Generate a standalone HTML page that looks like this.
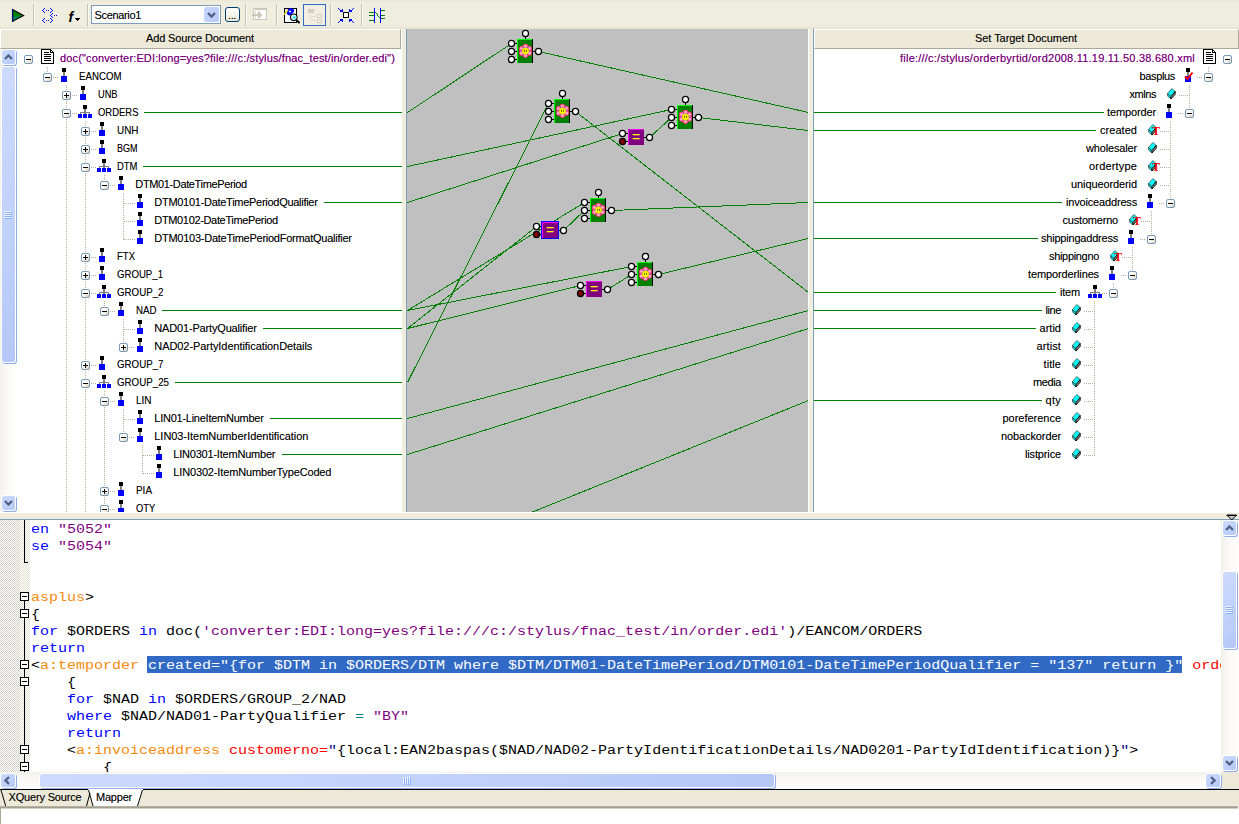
<!DOCTYPE html><html><head><meta charset="utf-8"><title>XQuery Mapper</title><style>
*{box-sizing:border-box;margin:0;padding:0}
html,body{width:1239px;height:824px;overflow:hidden;background:#efedde}
body{position:relative;font-family:"Liberation Sans",sans-serif;font-size:11px;color:#000;line-height:13px}
.a{position:absolute}
.t{position:absolute;white-space:pre;height:13px;line-height:13px;transform-origin:0 50%;text-shadow:0 0 0 rgba(0,0,0,.35)}
.tr{position:absolute;white-space:pre;height:13px;line-height:13px;transform-origin:100% 50%;text-align:right;text-shadow:0 0 0 rgba(0,0,0,.35)}
.pur{color:#7a007a;text-shadow:0 0 0 rgba(122,0,122,.6)}
.ex{position:absolute;width:9px;height:9px;border:1px solid #7898b5;border-radius:2px;background:linear-gradient(135deg,#fff 0%,#fff 40%,#d6d0bc 100%)}
.ex i{position:absolute;left:1px;top:3px;width:5px;height:1px;background:#000}
.ex b{position:absolute;left:3px;top:1px;width:1px;height:5px;background:#000}
.hd{position:absolute;background:#ece9d8;border-right:1px solid #aca899;border-bottom:1px solid #aca899;border-top:1px solid #fff;border-left:1px solid #fff;text-align:center;line-height:16px;height:20px}
.code{position:absolute;left:31px;white-space:pre;font-family:"Liberation Mono",monospace;font-size:12px;height:17px;line-height:17px;letter-spacing:0;transform:scaleX(1.25);transform-origin:0 0}
.kw{color:#0000ff}.st{color:#800080}.el{color:#f58a0c}.at{color:#ff0000}.op{color:#008080}.nv{color:#000080}
.sel{color:#fff}
.sb{position:absolute;background:linear-gradient(135deg,#cddafd 0%,#c1d2fb 50%,#b4c7f6 100%);border:1px solid #fff;border-radius:3px;box-shadow:1px 1px 0 0 #8fabe8}
</style></head><body>
<div class="a" style="left:0;top:0;width:1239px;height:29px;background:linear-gradient(180deg,#ebe8d7 0,#ebe8d7 1px,#efedde 2px,#efedde 26px,#ebe9da 27px,#e4e1cf 29px)"></div>
<div class="a" style="left:33px;top:4px;width:1px;height:22px;background:#c5c2b8"></div><div class="a" style="left:34px;top:4px;width:1px;height:22px;background:#f9f8f1"></div>
<div class="a" style="left:87px;top:4px;width:1px;height:22px;background:#c5c2b8"></div><div class="a" style="left:88px;top:4px;width:1px;height:22px;background:#f9f8f1"></div>
<div class="a" style="left:245px;top:4px;width:1px;height:22px;background:#c5c2b8"></div><div class="a" style="left:246px;top:4px;width:1px;height:22px;background:#f9f8f1"></div>
<div class="a" style="left:276px;top:4px;width:1px;height:22px;background:#c5c2b8"></div><div class="a" style="left:277px;top:4px;width:1px;height:22px;background:#f9f8f1"></div>
<div class="a" style="left:330px;top:4px;width:1px;height:22px;background:#c5c2b8"></div><div class="a" style="left:331px;top:4px;width:1px;height:22px;background:#f9f8f1"></div>
<div class="a" style="left:361px;top:4px;width:1px;height:22px;background:#c5c2b8"></div><div class="a" style="left:362px;top:4px;width:1px;height:22px;background:#f9f8f1"></div>
<svg class="a" style="left:11px;top:8px" width="15" height="16"><polygon points="1.5,1.6 12.6,7.5 1.5,13.4" fill="#008000" stroke="#000" stroke-width="1.1"/><polygon points="2.4,9 9,8.2 2.4,12" fill="#008080"/><rect x="1" y="1" width="1.2" height="13" fill="#000080"/></svg>
<svg class="a" style="left:42px;top:8px" width="17" height="16" shape-rendering="crispEdges" fill="#0000ff"><rect x="2" y="0" width="1" height="1"/><rect x="1" y="1" width="1" height="1"/><rect x="0" y="2" width="1" height="1"/><rect x="1" y="3" width="1" height="1"/><rect x="2" y="4" width="1" height="1"/><rect x="4" y="2" width="1" height="1"/><rect x="6" y="2" width="1" height="1"/><rect x="8" y="0" width="1" height="1"/><rect x="9" y="1" width="1" height="1"/><rect x="10" y="2" width="1" height="1"/><rect x="9" y="3" width="1" height="1"/><rect x="8" y="4" width="1" height="1"/><rect x="10" y="5" width="1" height="1"/><rect x="9" y="6" width="1" height="1"/><rect x="8" y="7" width="1" height="1"/><rect x="9" y="8" width="1" height="1"/><rect x="10" y="9" width="1" height="1"/><rect x="12" y="7" width="1" height="1"/><rect x="14" y="7" width="1" height="1"/><rect x="2" y="10" width="1" height="1"/><rect x="1" y="11" width="1" height="1"/><rect x="0" y="12" width="1" height="1"/><rect x="1" y="13" width="1" height="1"/><rect x="2" y="14" width="1" height="1"/><rect x="4" y="12" width="1" height="1"/><rect x="6" y="12" width="1" height="1"/><rect x="8" y="10" width="1" height="1"/><rect x="9" y="11" width="1" height="1"/><rect x="10" y="12" width="1" height="1"/><rect x="9" y="13" width="1" height="1"/><rect x="8" y="14" width="1" height="1"/></svg>
<div class="a" style="left:68.5px;top:8.5px;width:12px;height:16px;font-family:'Liberation Sans',sans-serif;font-style:italic;font-weight:bold;font-size:14px;line-height:16px">f</div>
<svg class="a" style="left:75px;top:18px" width="6" height="4" shape-rendering="crispEdges"><rect x="0" y="0" width="5" height="1"/><rect x="1" y="1" width="3" height="1"/><rect x="2" y="2" width="1" height="1"/></svg>
<div class="a" style="left:91px;top:5px;width:130px;height:19px;border:1px solid #7f9db9;background:#fff"></div>
<div class="t " id="scen" style="left:94.5px;top:8.6px;letter-spacing:-0.339px;">Scenario1</div>
<div class="a" style="left:204px;top:7px;width:15px;height:15px;background:linear-gradient(135deg,#c6d6fd,#b7c9f7);border-radius:2px"></div>
<svg class="a" style="left:207px;top:12px" width="10" height="7"><path d="M1 1L4.5 4.5L8 1" fill="none" stroke="#4d6185" stroke-width="2.3"/></svg>
<div class="a" style="left:225px;top:7px;width:15px;height:15px;border:1px solid #003c74;border-radius:3px;background:linear-gradient(#fff,#ece9d8)"></div>
<div class="t " id="dots" style="left:228px;top:9px;letter-spacing:-0.391px;">...</div>
<svg class="a" style="left:252px;top:8px" width="16" height="13" shape-rendering="crispEdges"><rect x="1.5" y="0.5" width="13" height="11" fill="#fff" stroke="#cbc7b8"/><rect x="1" y="0" width="14" height="2" fill="#cbc7b8"/><rect x="2" y="1" width="1" height="1" fill="#fff"/><rect x="3" y="3" width="1" height="8" fill="#dedbd0"/><rect x="0" y="6" width="8" height="2" fill="#cbc7b8"/><polygon points="6,3 10,7 6,11" fill="#cbc7b8"/></svg>
<svg class="a" style="left:283px;top:7px" width="18" height="17"><rect x="1.5" y="1.5" width="12" height="14" fill="#fff" stroke="#000" stroke-width="1"/><path d="M4 3.5C5 1 10 0.5 11 3C12 5 9 6 8.5 8L6 8.5C4 8 3 6 4 3.5Z" fill="#0000ff"/><circle cx="7" cy="4.5" r="1" fill="#fff"/><path d="M1 7.5L5 3" stroke="#e8d800" stroke-width="1.4"/><circle cx="10.8" cy="10.3" r="3.3" fill="#d8fbff" stroke="#000" stroke-width="1.1"/><circle cx="11.3" cy="10.5" r="1.3" fill="#00e8f0"/><path d="M13.2 13L16.6 16" stroke="#000" stroke-width="2"/></svg>
<div class="a" style="left:303px;top:4px;width:23px;height:22px;border:1px solid #316ac5;background:#f1eee1"></div>
<svg class="a" style="left:307px;top:8px" width="17" height="16" shape-rendering="crispEdges"><rect x="1" y="1" width="6" height="4" fill="#d2cfc2"/><rect x="3" y="6" width="1" height="1" fill="#d2cfc2"/><rect x="3" y="8" width="1" height="1" fill="#d2cfc2"/><rect x="3" y="10" width="1" height="1" fill="#d2cfc2"/><rect x="3" y="12" width="1" height="1" fill="#d2cfc2"/><rect x="5" y="8" width="1" height="1" fill="#d2cfc2"/><rect x="7" y="8" width="1" height="1" fill="#d2cfc2"/><rect x="5" y="12" width="1" height="1" fill="#d2cfc2"/><rect x="7" y="12" width="1" height="1" fill="#d2cfc2"/><rect x="10" y="6" width="5" height="4" fill="#d2cfc2"/><rect x="11" y="7" width="3" height="2" fill="#f4f2e8"/><rect x="10" y="11" width="5" height="4" fill="#d2cfc2"/><rect x="11" y="12" width="3" height="2" fill="#f4f2e8"/></svg>
<svg class="a" style="left:338px;top:8px" width="17" height="16" shape-rendering="crispEdges"><rect x="5" y="4" width="6" height="6" fill="#000"/><rect x="6" y="5" width="4" height="4" fill="#fff"/><g fill="#0000ff"><rect x="0" y="0" width="1" height="1"/><rect x="15" y="0" width="1" height="1"/><rect x="0" y="14" width="1" height="1"/><rect x="15" y="14" width="1" height="1"/><rect x="1" y="1" width="1" height="1"/><rect x="14" y="1" width="1" height="1"/><rect x="1" y="13" width="1" height="1"/><rect x="14" y="13" width="1" height="1"/><rect x="2" y="2" width="1" height="1"/><rect x="13" y="2" width="1" height="1"/><rect x="2" y="12" width="1" height="1"/><rect x="13" y="12" width="1" height="1"/><rect x="3" y="3" width="1" height="1"/><rect x="12" y="3" width="1" height="1"/><rect x="3" y="11" width="1" height="1"/><rect x="12" y="11" width="1" height="1"/><rect x="4" y="3" width="1" height="1"/><rect x="11" y="3" width="1" height="1"/><rect x="4" y="11" width="1" height="1"/><rect x="11" y="11" width="1" height="1"/><rect x="2" y="3" width="1" height="1"/><rect x="13" y="3" width="1" height="1"/><rect x="2" y="11" width="1" height="1"/><rect x="13" y="11" width="1" height="1"/><rect x="4" y="2" width="1" height="1"/><rect x="11" y="2" width="1" height="1"/><rect x="4" y="12" width="1" height="1"/><rect x="11" y="12" width="1" height="1"/><rect x="4" y="1" width="1" height="1"/><rect x="11" y="1" width="1" height="1"/><rect x="4" y="13" width="1" height="1"/><rect x="11" y="13" width="1" height="1"/><rect x="3" y="2" width="1" height="1"/><rect x="12" y="2" width="1" height="1"/><rect x="3" y="12" width="1" height="1"/><rect x="12" y="12" width="1" height="1"/></g></svg>
<svg class="a" style="left:369px;top:8px" width="17" height="16" shape-rendering="crispEdges"><g fill="#008000"><rect x="0" y="4" width="6" height="1"/><rect x="0" y="7" width="5" height="1"/><rect x="0" y="12" width="5" height="1"/><rect x="12" y="2" width="4" height="1"/><rect x="12" y="7" width="4" height="1"/><rect x="12" y="10" width="4" height="1"/><rect x="6" y="4" width="1" height="1"/><rect x="7" y="5" width="1" height="1"/><rect x="8" y="6" width="1" height="2"/><rect x="9" y="8" width="1" height="1"/><rect x="10" y="9" width="1" height="1"/><rect x="11" y="10" width="1" height="1"/></g><rect x="5" y="0" width="1" height="15" fill="#0000ff"/><rect x="11" y="0" width="1" height="15" fill="#0000ff"/></svg>
<div class="a" style="left:0;top:29px;width:402px;height:484px;background:#fff;overflow:hidden" id="lp">
</div>
<div class="hd" style="left:0;top:29px;width:401px"></div>
<div class="t " id="hsrc" style="left:146px;top:31.6px;letter-spacing:-0.141px;">Add Source Document</div>
<div class="a" style="left:0;top:49px;width:17px;height:464px;background:linear-gradient(90deg,#f3f1ec,#fbfaf8 50%,#fefefd)"></div>
<div class="sb" style="left:1px;top:49px;width:15px;height:16px"></div>
<svg class="a" style="left:4px;top:54px" width="9" height="6"><path d="M1 5L4.5 1.5L8 5" fill="none" stroke="#4d6185" stroke-width="2.3"/></svg>
<div class="sb" style="left:1px;top:66px;width:15px;height:297px"></div>
<svg class="a" style="left:4px;top:211px" width="8" height="8" shape-rendering="crispEdges"><g fill="#eef4fe"><rect x="0" y="0" width="7" height="1"/><rect x="0" y="2" width="7" height="1"/><rect x="0" y="4" width="7" height="1"/><rect x="0" y="6" width="7" height="1"/></g><g fill="#8cb0f8"><rect x="1" y="1" width="7" height="1"/><rect x="1" y="3" width="7" height="1"/><rect x="1" y="5" width="7" height="1"/><rect x="1" y="7" width="7" height="1"/></g></svg>
<div class="sb" style="left:1px;top:495px;width:15px;height:16px"></div>
<svg class="a" style="left:4px;top:500px" width="9" height="6"><path d="M1 1L4.5 4.5L8 1" fill="none" stroke="#4d6185" stroke-width="2.3"/></svg>
<div class="a" style="left:17px;top:49px;width:385px;height:464px;overflow:hidden"><div class="a" style="left:-17px;top:-49px;width:420px;height:600px">
<div class="a" style="left:47px;top:67px;width:1px;height:11px;background:repeating-linear-gradient(180deg,#b5b09c 0 1px,transparent 1px 2px)"></div>
<div class="a" style="left:66px;top:85px;width:1px;height:428px;background:repeating-linear-gradient(180deg,#b5b09c 0 1px,transparent 1px 2px)"></div>
<div class="a" style="left:85px;top:121px;width:1px;height:392px;background:repeating-linear-gradient(180deg,#b5b09c 0 1px,transparent 1px 2px)"></div>
<div class="a" style="left:104px;top:175px;width:1px;height:11px;background:repeating-linear-gradient(180deg,#b5b09c 0 1px,transparent 1px 2px)"></div>
<div class="a" style="left:123px;top:193px;width:1px;height:47px;background:repeating-linear-gradient(180deg,#b5b09c 0 1px,transparent 1px 2px)"></div>
<div class="a" style="left:104px;top:301px;width:1px;height:11px;background:repeating-linear-gradient(180deg,#b5b09c 0 1px,transparent 1px 2px)"></div>
<div class="a" style="left:123px;top:319px;width:1px;height:29px;background:repeating-linear-gradient(180deg,#b5b09c 0 1px,transparent 1px 2px)"></div>
<div class="a" style="left:104px;top:391px;width:1px;height:122px;background:repeating-linear-gradient(180deg,#b5b09c 0 1px,transparent 1px 2px)"></div>
<div class="a" style="left:123px;top:409px;width:1px;height:29px;background:repeating-linear-gradient(180deg,#b5b09c 0 1px,transparent 1px 2px)"></div>
<div class="a" style="left:142px;top:445px;width:1px;height:29px;background:repeating-linear-gradient(180deg,#b5b09c 0 1px,transparent 1px 2px)"></div>
<div class="ex" style="left:24px;top:55px"><i></i></div>
<svg class="a" style="left:41px;top:49px" width="14" height="16" shape-rendering="crispEdges"><path d="M0.5 0.5H9.5L12.5 3.5V14.5H0.5Z" fill="#fff" stroke="#000"/><path d="M9.5 0.5V3.5H12.5" fill="none" stroke="#000"/><rect x="12" y="4" width="1" height="11" fill="#000"/><rect x="1" y="14" width="12" height="1" fill="#000"/><rect x="3" y="3" width="5" height="1" fill="#000"/><rect x="3" y="5" width="7" height="1" fill="#000"/><rect x="3" y="7" width="7" height="1" fill="#000"/><rect x="3" y="9" width="7" height="1" fill="#000"/><rect x="3" y="11" width="7" height="1" fill="#000"/></svg>
<div class="t pur" id="l0" style="left:60px;top:52px;letter-spacing:0.145px;">doc("converter:EDI:long=yes?file:///c:/stylus/fnac_test/in/order.edi")</div>
<div class="ex" style="left:43px;top:73px"><i></i></div>
<div class="a" style="left:53px;top:77px;width:6px;height:1px;background:repeating-linear-gradient(90deg,#b5b09c 0 1px,transparent 1px 2px)"></div>
<svg class="a" style="left:61px;top:67px" width="6" height="15" shape-rendering="crispEdges"><rect x="1" y="1" width="4" height="4" fill="#000"/><rect x="2" y="5" width="2" height="4" fill="#808080"/><rect x="0" y="9" width="6" height="6" fill="#0000ff"/></svg>
<div class="t " id="l1" style="left:78.9px;top:70px;transform:scaleX(0.8803);">EANCOM</div>
<div class="ex" style="left:62px;top:91px"><i></i><b></b></div>
<div class="a" style="left:72px;top:95px;width:6px;height:1px;background:repeating-linear-gradient(90deg,#b5b09c 0 1px,transparent 1px 2px)"></div>
<svg class="a" style="left:80px;top:85px" width="6" height="15" shape-rendering="crispEdges"><rect x="1" y="1" width="4" height="4" fill="#000"/><rect x="2" y="5" width="2" height="4" fill="#808080"/><rect x="0" y="9" width="6" height="6" fill="#0000ff"/></svg>
<div class="t " id="l2" style="left:97.9px;top:88px;transform:scaleX(0.8393);">UNB</div>
<div class="ex" style="left:62px;top:109px"><i></i></div>
<div class="a" style="left:72px;top:113px;width:6px;height:1px;background:repeating-linear-gradient(90deg,#b5b09c 0 1px,transparent 1px 2px)"></div>
<svg class="a" style="left:78px;top:103px" width="14" height="15" shape-rendering="crispEdges"><rect x="5" y="2" width="4" height="4" fill="#000"/><rect x="6" y="6" width="2" height="3" fill="#808080"/><rect x="2" y="9" width="10" height="1" fill="#808080"/><rect x="2" y="9" width="1" height="2" fill="#808080"/><rect x="11" y="9" width="1" height="2" fill="#808080"/><rect x="6" y="9" width="2" height="2" fill="#808080"/><rect x="0" y="11" width="4" height="4" fill="#0000ff"/><rect x="5" y="11" width="4" height="4" fill="#0000ff"/><rect x="10" y="11" width="4" height="4" fill="#0000ff"/></svg>
<div class="t " id="l3" style="left:97.9px;top:106px;transform:scaleX(0.8606);">ORDERS</div>
<div class="a" style="left:144px;top:112px;width:258px;height:1px;background:#008000"></div>
<div class="ex" style="left:81px;top:127px"><i></i><b></b></div>
<div class="a" style="left:91px;top:131px;width:6px;height:1px;background:repeating-linear-gradient(90deg,#b5b09c 0 1px,transparent 1px 2px)"></div>
<svg class="a" style="left:99px;top:121px" width="6" height="15" shape-rendering="crispEdges"><rect x="1" y="1" width="4" height="4" fill="#000"/><rect x="2" y="5" width="2" height="4" fill="#808080"/><rect x="0" y="9" width="6" height="6" fill="#0000ff"/></svg>
<div class="t " id="l4" style="left:116.9px;top:124px;transform:scaleX(0.9017);">UNH</div>
<div class="ex" style="left:81px;top:145px"><i></i><b></b></div>
<div class="a" style="left:91px;top:149px;width:6px;height:1px;background:repeating-linear-gradient(90deg,#b5b09c 0 1px,transparent 1px 2px)"></div>
<svg class="a" style="left:99px;top:139px" width="6" height="15" shape-rendering="crispEdges"><rect x="1" y="1" width="4" height="4" fill="#000"/><rect x="2" y="5" width="2" height="4" fill="#808080"/><rect x="0" y="9" width="6" height="6" fill="#0000ff"/></svg>
<div class="t " id="l5" style="left:116.9px;top:142px;transform:scaleX(0.8180);">BGM</div>
<div class="ex" style="left:81px;top:163px"><i></i></div>
<div class="a" style="left:91px;top:167px;width:6px;height:1px;background:repeating-linear-gradient(90deg,#b5b09c 0 1px,transparent 1px 2px)"></div>
<svg class="a" style="left:97px;top:157px" width="14" height="15" shape-rendering="crispEdges"><rect x="5" y="2" width="4" height="4" fill="#000"/><rect x="6" y="6" width="2" height="3" fill="#808080"/><rect x="2" y="9" width="10" height="1" fill="#808080"/><rect x="2" y="9" width="1" height="2" fill="#808080"/><rect x="11" y="9" width="1" height="2" fill="#808080"/><rect x="6" y="9" width="2" height="2" fill="#808080"/><rect x="0" y="11" width="4" height="4" fill="#0000ff"/><rect x="5" y="11" width="4" height="4" fill="#0000ff"/><rect x="10" y="11" width="4" height="4" fill="#0000ff"/></svg>
<div class="t " id="l6" style="left:116.9px;top:160px;transform:scaleX(0.8603);">DTM</div>
<div class="a" style="left:143px;top:166px;width:259px;height:1px;background:#008000"></div>
<div class="ex" style="left:100px;top:181px"><i></i></div>
<div class="a" style="left:110px;top:185px;width:6px;height:1px;background:repeating-linear-gradient(90deg,#b5b09c 0 1px,transparent 1px 2px)"></div>
<svg class="a" style="left:118px;top:175px" width="6" height="15" shape-rendering="crispEdges"><rect x="1" y="1" width="4" height="4" fill="#000"/><rect x="2" y="5" width="2" height="4" fill="#808080"/><rect x="0" y="9" width="6" height="6" fill="#0000ff"/></svg>
<div class="t " id="l7" style="left:135.3px;top:178px;letter-spacing:-0.365px;">DTM01-DateTimePeriod</div>
<div class="a" style="left:124px;top:203px;width:11px;height:1px;background:repeating-linear-gradient(90deg,#b5b09c 0 1px,transparent 1px 2px)"></div>
<svg class="a" style="left:137px;top:193px" width="6" height="15" shape-rendering="crispEdges"><rect x="1" y="1" width="4" height="4" fill="#000"/><rect x="2" y="5" width="2" height="4" fill="#808080"/><rect x="0" y="9" width="6" height="6" fill="#0000ff"/></svg>
<div class="t " id="l8" style="left:154.3px;top:196px;letter-spacing:-0.281px;">DTM0101-DateTimePeriodQualifier</div>
<div class="a" style="left:324px;top:202px;width:78px;height:1px;background:#008000"></div>
<div class="a" style="left:124px;top:221px;width:11px;height:1px;background:repeating-linear-gradient(90deg,#b5b09c 0 1px,transparent 1px 2px)"></div>
<svg class="a" style="left:137px;top:211px" width="6" height="15" shape-rendering="crispEdges"><rect x="1" y="1" width="4" height="4" fill="#000"/><rect x="2" y="5" width="2" height="4" fill="#808080"/><rect x="0" y="9" width="6" height="6" fill="#0000ff"/></svg>
<div class="t " id="l9" style="left:154.3px;top:214px;letter-spacing:-0.342px;">DTM0102-DateTimePeriod</div>
<div class="a" style="left:124px;top:239px;width:11px;height:1px;background:repeating-linear-gradient(90deg,#b5b09c 0 1px,transparent 1px 2px)"></div>
<svg class="a" style="left:137px;top:229px" width="6" height="15" shape-rendering="crispEdges"><rect x="1" y="1" width="4" height="4" fill="#000"/><rect x="2" y="5" width="2" height="4" fill="#808080"/><rect x="0" y="9" width="6" height="6" fill="#0000ff"/></svg>
<div class="t " id="l10" style="left:154.3px;top:232px;letter-spacing:-0.255px;">DTM0103-DateTimePeriodFormatQualifier</div>
<div class="ex" style="left:81px;top:253px"><i></i><b></b></div>
<div class="a" style="left:91px;top:257px;width:6px;height:1px;background:repeating-linear-gradient(90deg,#b5b09c 0 1px,transparent 1px 2px)"></div>
<svg class="a" style="left:99px;top:247px" width="6" height="15" shape-rendering="crispEdges"><rect x="1" y="1" width="4" height="4" fill="#000"/><rect x="2" y="5" width="2" height="4" fill="#808080"/><rect x="0" y="9" width="6" height="6" fill="#0000ff"/></svg>
<div class="t " id="l11" style="left:116.9px;top:250px;transform:scaleX(0.8662);">FTX</div>
<div class="ex" style="left:81px;top:271px"><i></i><b></b></div>
<div class="a" style="left:91px;top:275px;width:6px;height:1px;background:repeating-linear-gradient(90deg,#b5b09c 0 1px,transparent 1px 2px)"></div>
<svg class="a" style="left:99px;top:265px" width="6" height="15" shape-rendering="crispEdges"><rect x="1" y="1" width="4" height="4" fill="#000"/><rect x="2" y="5" width="2" height="4" fill="#808080"/><rect x="0" y="9" width="6" height="6" fill="#0000ff"/></svg>
<div class="t " id="l12" style="left:116.9px;top:268px;transform:scaleX(0.8749);">GROUP_1</div>
<div class="ex" style="left:81px;top:289px"><i></i></div>
<div class="a" style="left:91px;top:293px;width:6px;height:1px;background:repeating-linear-gradient(90deg,#b5b09c 0 1px,transparent 1px 2px)"></div>
<svg class="a" style="left:97px;top:283px" width="14" height="15" shape-rendering="crispEdges"><rect x="5" y="2" width="4" height="4" fill="#000"/><rect x="6" y="6" width="2" height="3" fill="#808080"/><rect x="2" y="9" width="10" height="1" fill="#808080"/><rect x="2" y="9" width="1" height="2" fill="#808080"/><rect x="11" y="9" width="1" height="2" fill="#808080"/><rect x="6" y="9" width="2" height="2" fill="#808080"/><rect x="0" y="11" width="4" height="4" fill="#0000ff"/><rect x="5" y="11" width="4" height="4" fill="#0000ff"/><rect x="10" y="11" width="4" height="4" fill="#0000ff"/></svg>
<div class="t " id="l13" style="left:116.9px;top:286px;transform:scaleX(0.8844);">GROUP_2</div>
<div class="ex" style="left:100px;top:307px"><i></i></div>
<div class="a" style="left:110px;top:311px;width:6px;height:1px;background:repeating-linear-gradient(90deg,#b5b09c 0 1px,transparent 1px 2px)"></div>
<svg class="a" style="left:118px;top:301px" width="6" height="15" shape-rendering="crispEdges"><rect x="1" y="1" width="4" height="4" fill="#000"/><rect x="2" y="5" width="2" height="4" fill="#808080"/><rect x="0" y="9" width="6" height="6" fill="#0000ff"/></svg>
<div class="t " id="l14" style="left:135.9px;top:304px;transform:scaleX(0.8823);">NAD</div>
<div class="a" style="left:162px;top:310px;width:240px;height:1px;background:#008000"></div>
<div class="a" style="left:124px;top:329px;width:11px;height:1px;background:repeating-linear-gradient(90deg,#b5b09c 0 1px,transparent 1px 2px)"></div>
<svg class="a" style="left:137px;top:319px" width="6" height="15" shape-rendering="crispEdges"><rect x="1" y="1" width="4" height="4" fill="#000"/><rect x="2" y="5" width="2" height="4" fill="#808080"/><rect x="0" y="9" width="6" height="6" fill="#0000ff"/></svg>
<div class="t " id="l15" style="left:154.3px;top:322px;letter-spacing:-0.168px;">NAD01-PartyQualifier</div>
<div class="a" style="left:263px;top:328px;width:139px;height:1px;background:#008000"></div>
<div class="ex" style="left:119px;top:343px"><i></i><b></b></div>
<div class="a" style="left:129px;top:347px;width:6px;height:1px;background:repeating-linear-gradient(90deg,#b5b09c 0 1px,transparent 1px 2px)"></div>
<svg class="a" style="left:137px;top:337px" width="6" height="15" shape-rendering="crispEdges"><rect x="1" y="1" width="4" height="4" fill="#000"/><rect x="2" y="5" width="2" height="4" fill="#808080"/><rect x="0" y="9" width="6" height="6" fill="#0000ff"/></svg>
<div class="t " id="l16" style="left:154.3px;top:340px;letter-spacing:-0.068px;">NAD02-PartyIdentificationDetails</div>
<div class="ex" style="left:81px;top:361px"><i></i><b></b></div>
<div class="a" style="left:91px;top:365px;width:6px;height:1px;background:repeating-linear-gradient(90deg,#b5b09c 0 1px,transparent 1px 2px)"></div>
<svg class="a" style="left:99px;top:355px" width="6" height="15" shape-rendering="crispEdges"><rect x="1" y="1" width="4" height="4" fill="#000"/><rect x="2" y="5" width="2" height="4" fill="#808080"/><rect x="0" y="9" width="6" height="6" fill="#0000ff"/></svg>
<div class="t " id="l17" style="left:116.9px;top:358px;transform:scaleX(0.8844);">GROUP_7</div>
<div class="ex" style="left:81px;top:379px"><i></i></div>
<div class="a" style="left:91px;top:383px;width:6px;height:1px;background:repeating-linear-gradient(90deg,#b5b09c 0 1px,transparent 1px 2px)"></div>
<svg class="a" style="left:97px;top:373px" width="14" height="15" shape-rendering="crispEdges"><rect x="5" y="2" width="4" height="4" fill="#000"/><rect x="6" y="6" width="2" height="3" fill="#808080"/><rect x="2" y="9" width="10" height="1" fill="#808080"/><rect x="2" y="9" width="1" height="2" fill="#808080"/><rect x="11" y="9" width="1" height="2" fill="#808080"/><rect x="6" y="9" width="2" height="2" fill="#808080"/><rect x="0" y="11" width="4" height="4" fill="#0000ff"/><rect x="5" y="11" width="4" height="4" fill="#0000ff"/><rect x="10" y="11" width="4" height="4" fill="#0000ff"/></svg>
<div class="t " id="l18" style="left:116.9px;top:376px;transform:scaleX(0.8858);">GROUP_25</div>
<div class="a" style="left:175px;top:382px;width:227px;height:1px;background:#008000"></div>
<div class="ex" style="left:100px;top:397px"><i></i></div>
<div class="a" style="left:110px;top:401px;width:6px;height:1px;background:repeating-linear-gradient(90deg,#b5b09c 0 1px,transparent 1px 2px)"></div>
<svg class="a" style="left:118px;top:391px" width="6" height="15" shape-rendering="crispEdges"><rect x="1" y="1" width="4" height="4" fill="#000"/><rect x="2" y="5" width="2" height="4" fill="#808080"/><rect x="0" y="9" width="6" height="6" fill="#0000ff"/></svg>
<div class="t " id="l19" style="left:135.9px;top:394px;transform:scaleX(0.9051);">LIN</div>
<div class="a" style="left:124px;top:419px;width:11px;height:1px;background:repeating-linear-gradient(90deg,#b5b09c 0 1px,transparent 1px 2px)"></div>
<svg class="a" style="left:137px;top:409px" width="6" height="15" shape-rendering="crispEdges"><rect x="1" y="1" width="4" height="4" fill="#000"/><rect x="2" y="5" width="2" height="4" fill="#808080"/><rect x="0" y="9" width="6" height="6" fill="#0000ff"/></svg>
<div class="t " id="l20" style="left:154.3px;top:412px;letter-spacing:-0.252px;">LIN01-LineItemNumber</div>
<div class="a" style="left:270px;top:418px;width:132px;height:1px;background:#008000"></div>
<div class="ex" style="left:119px;top:433px"><i></i></div>
<div class="a" style="left:129px;top:437px;width:6px;height:1px;background:repeating-linear-gradient(90deg,#b5b09c 0 1px,transparent 1px 2px)"></div>
<svg class="a" style="left:137px;top:427px" width="6" height="15" shape-rendering="crispEdges"><rect x="1" y="1" width="4" height="4" fill="#000"/><rect x="2" y="5" width="2" height="4" fill="#808080"/><rect x="0" y="9" width="6" height="6" fill="#0000ff"/></svg>
<div class="t " id="l21" style="left:154.3px;top:430px;letter-spacing:-0.043px;">LIN03-ItemNumberIdentification</div>
<div class="a" style="left:143px;top:455px;width:11px;height:1px;background:repeating-linear-gradient(90deg,#b5b09c 0 1px,transparent 1px 2px)"></div>
<svg class="a" style="left:156px;top:445px" width="6" height="15" shape-rendering="crispEdges"><rect x="1" y="1" width="4" height="4" fill="#000"/><rect x="2" y="5" width="2" height="4" fill="#808080"/><rect x="0" y="9" width="6" height="6" fill="#0000ff"/></svg>
<div class="t " id="l22" style="left:173.3px;top:448px;letter-spacing:-0.210px;">LIN0301-ItemNumber</div>
<div class="a" style="left:282px;top:454px;width:120px;height:1px;background:#008000"></div>
<div class="a" style="left:143px;top:473px;width:11px;height:1px;background:repeating-linear-gradient(90deg,#b5b09c 0 1px,transparent 1px 2px)"></div>
<svg class="a" style="left:156px;top:463px" width="6" height="15" shape-rendering="crispEdges"><rect x="1" y="1" width="4" height="4" fill="#000"/><rect x="2" y="5" width="2" height="4" fill="#808080"/><rect x="0" y="9" width="6" height="6" fill="#0000ff"/></svg>
<div class="t " id="l23" style="left:173.3px;top:466px;letter-spacing:-0.149px;">LIN0302-ItemNumberTypeCoded</div>
<div class="ex" style="left:100px;top:487px"><i></i><b></b></div>
<div class="a" style="left:110px;top:491px;width:6px;height:1px;background:repeating-linear-gradient(90deg,#b5b09c 0 1px,transparent 1px 2px)"></div>
<svg class="a" style="left:118px;top:481px" width="6" height="15" shape-rendering="crispEdges"><rect x="1" y="1" width="4" height="4" fill="#000"/><rect x="2" y="5" width="2" height="4" fill="#808080"/><rect x="0" y="9" width="6" height="6" fill="#0000ff"/></svg>
<div class="t " id="l24" style="left:135.9px;top:484px;transform:scaleX(0.9022);">PIA</div>
<div class="ex" style="left:100px;top:505px"><i></i></div>
<div class="a" style="left:110px;top:509px;width:6px;height:1px;background:repeating-linear-gradient(90deg,#b5b09c 0 1px,transparent 1px 2px)"></div>
<svg class="a" style="left:118px;top:499px" width="6" height="15" shape-rendering="crispEdges"><rect x="1" y="1" width="4" height="4" fill="#000"/><rect x="2" y="5" width="2" height="4" fill="#808080"/><rect x="0" y="9" width="6" height="6" fill="#0000ff"/></svg>
<div class="t " id="l25" style="left:135.9px;top:502px;transform:scaleX(0.8486);">QTY</div>
</div></div>
<div class="a" style="left:406px;top:29px;width:1px;height:484px;background:#7f9db9"></div>
<div class="a" style="left:407px;top:29px;width:401px;height:484px;background:#c0c0c0"></div>
<div class="a" style="left:808px;top:29px;width:1px;height:484px;background:#fff"></div>
<div class="a" style="left:813px;top:29px;width:1px;height:484px;background:#7f9db9"></div>
<svg class="a" style="left:407px;top:29px" width="401" height="484" viewBox="407 29 401 484">
<g stroke="#008000" stroke-width="1" shape-rendering="crispEdges">
<line x1="407.5" y1="112.5" x2="511.5" y2="43.5"/>
<line x1="538.5" y1="51.5" x2="808.5" y2="112.5"/>
<line x1="407.5" y1="382.5" x2="548.5" y2="103.5"/>
<line x1="575.5" y1="111.5" x2="808.5" y2="292.5"/>
<line x1="407.5" y1="166.5" x2="671.5" y2="109.5"/>
<line x1="407.5" y1="202.5" x2="622.5" y2="133.5"/>
<line x1="649.5" y1="137.5" x2="671.5" y2="117.5"/>
<line x1="698.5" y1="117.5" x2="808.5" y2="130.5"/>
<line x1="407.5" y1="310.5" x2="584.5" y2="202.5"/>
<line x1="407.5" y1="310.5" x2="631.5" y2="266.5"/>
<line x1="407.5" y1="328.5" x2="536.5" y2="226.5"/>
<line x1="407.5" y1="328.5" x2="580.5" y2="285.5"/>
<line x1="563.5" y1="230.5" x2="584.5" y2="210.5"/>
<line x1="611.5" y1="210.5" x2="808.5" y2="202.5"/>
<line x1="658.5" y1="274.5" x2="808.5" y2="238.5"/>
<line x1="607.5" y1="289.5" x2="631.5" y2="274.5"/>
<line x1="407.5" y1="418.5" x2="808.5" y2="310.5"/>
<line x1="407.5" y1="454.5" x2="808.5" y2="328.5"/>
<line x1="407.5" y1="562.5" x2="808.5" y2="400.5"/>
</g>
<g stroke="#000" stroke-width="1" shape-rendering="crispEdges"><line x1="514" y1="43.5" x2="517" y2="43.5"/><line x1="514" y1="51.5" x2="517" y2="51.5"/><line x1="514" y1="59.5" x2="517" y2="59.5"/><line x1="533" y1="51.5" x2="536" y2="51.5"/><line x1="525.5" y1="36" x2="525.5" y2="39"/></g>
<rect x="517" y="39" width="16" height="24" fill="#008000" shape-rendering="crispEdges"/>
<rect x="517" y="39" width="16" height="1" fill="#00ff00" shape-rendering="crispEdges"/><rect x="517" y="39" width="1" height="24" fill="#00ff00" shape-rendering="crispEdges"/><rect x="532" y="39" width="1" height="24" fill="#000" shape-rendering="crispEdges"/>
<g transform="translate(525.5 50.8)"><circle cx="3.46" cy="2.00" r="3.1" fill="#e8285c"/><circle cx="0.00" cy="4.00" r="3.1" fill="#e8285c"/><circle cx="-3.46" cy="2.00" r="3.1" fill="#e8285c"/><circle cx="-3.46" cy="-2.00" r="3.1" fill="#e8285c"/><circle cx="-0.00" cy="-4.00" r="3.1" fill="#e8285c"/><circle cx="3.46" cy="-2.00" r="3.1" fill="#e8285c"/><circle cx="3.72" cy="2.15" r="2.3" fill="#ff5c9a"/><circle cx="0.00" cy="4.30" r="2.3" fill="#ff5c9a"/><circle cx="-3.72" cy="2.15" r="2.3" fill="#ff5c9a"/><circle cx="-3.72" cy="-2.15" r="2.3" fill="#ff5c9a"/><circle cx="-0.00" cy="-4.30" r="2.3" fill="#ff5c9a"/><circle cx="3.72" cy="-2.15" r="2.3" fill="#ff5c9a"/><circle cx="4.24" cy="2.45" r="1.2" fill="#ffb8d4"/><circle cx="0.00" cy="4.90" r="1.2" fill="#ffb8d4"/><circle cx="-4.24" cy="2.45" r="1.2" fill="#ffb8d4"/><circle cx="-4.24" cy="-2.45" r="1.2" fill="#ffb8d4"/><circle cx="-0.00" cy="-4.90" r="1.2" fill="#ffb8d4"/><circle cx="4.24" cy="-2.45" r="1.2" fill="#ffb8d4"/><circle cx="3.60" cy="0.00" r="0.7" fill="#5a78d8"/><circle cx="1.80" cy="3.12" r="0.7" fill="#5a78d8"/><circle cx="-1.80" cy="3.12" r="0.7" fill="#5a78d8"/><circle cx="-3.60" cy="0.00" r="0.7" fill="#5a78d8"/><circle cx="-1.80" cy="-3.12" r="0.7" fill="#5a78d8"/><circle cx="1.80" cy="-3.12" r="0.7" fill="#5a78d8"/><circle cx="0" cy="0.3" r="3.3" fill="#ffff00" stroke="#d0b000" stroke-width="0.5"/><rect x="-1.5" y="-1" width="1" height="2" fill="#706000"/><rect x="0.5" y="-1" width="1" height="2" fill="#706000"/></g>
<circle cx="511.5" cy="43.5" r="3.05" fill="#fff" stroke="#000" stroke-width="1.25"/>
<circle cx="511.5" cy="51.5" r="3.05" fill="#fff" stroke="#000" stroke-width="1.25"/>
<circle cx="511.5" cy="59.5" r="3.05" fill="#fff" stroke="#000" stroke-width="1.25"/>
<circle cx="538.5" cy="51.5" r="3.05" fill="#fff" stroke="#000" stroke-width="1.25"/>
<circle cx="525.5" cy="33.5" r="3.05" fill="#fff" stroke="#000" stroke-width="1.25"/>
<g stroke="#000" stroke-width="1" shape-rendering="crispEdges"><line x1="551" y1="103.5" x2="554" y2="103.5"/><line x1="551" y1="111.5" x2="554" y2="111.5"/><line x1="551" y1="119.5" x2="554" y2="119.5"/><line x1="570" y1="111.5" x2="573" y2="111.5"/><line x1="562.5" y1="96" x2="562.5" y2="99"/></g>
<rect x="554" y="99" width="16" height="24" fill="#008000" shape-rendering="crispEdges"/>
<rect x="554" y="99" width="16" height="1" fill="#00ff00" shape-rendering="crispEdges"/><rect x="554" y="99" width="1" height="24" fill="#00ff00" shape-rendering="crispEdges"/><rect x="569" y="99" width="1" height="24" fill="#000" shape-rendering="crispEdges"/>
<g transform="translate(562.5 110.8)"><circle cx="3.46" cy="2.00" r="3.1" fill="#e8285c"/><circle cx="0.00" cy="4.00" r="3.1" fill="#e8285c"/><circle cx="-3.46" cy="2.00" r="3.1" fill="#e8285c"/><circle cx="-3.46" cy="-2.00" r="3.1" fill="#e8285c"/><circle cx="-0.00" cy="-4.00" r="3.1" fill="#e8285c"/><circle cx="3.46" cy="-2.00" r="3.1" fill="#e8285c"/><circle cx="3.72" cy="2.15" r="2.3" fill="#ff5c9a"/><circle cx="0.00" cy="4.30" r="2.3" fill="#ff5c9a"/><circle cx="-3.72" cy="2.15" r="2.3" fill="#ff5c9a"/><circle cx="-3.72" cy="-2.15" r="2.3" fill="#ff5c9a"/><circle cx="-0.00" cy="-4.30" r="2.3" fill="#ff5c9a"/><circle cx="3.72" cy="-2.15" r="2.3" fill="#ff5c9a"/><circle cx="4.24" cy="2.45" r="1.2" fill="#ffb8d4"/><circle cx="0.00" cy="4.90" r="1.2" fill="#ffb8d4"/><circle cx="-4.24" cy="2.45" r="1.2" fill="#ffb8d4"/><circle cx="-4.24" cy="-2.45" r="1.2" fill="#ffb8d4"/><circle cx="-0.00" cy="-4.90" r="1.2" fill="#ffb8d4"/><circle cx="4.24" cy="-2.45" r="1.2" fill="#ffb8d4"/><circle cx="3.60" cy="0.00" r="0.7" fill="#5a78d8"/><circle cx="1.80" cy="3.12" r="0.7" fill="#5a78d8"/><circle cx="-1.80" cy="3.12" r="0.7" fill="#5a78d8"/><circle cx="-3.60" cy="0.00" r="0.7" fill="#5a78d8"/><circle cx="-1.80" cy="-3.12" r="0.7" fill="#5a78d8"/><circle cx="1.80" cy="-3.12" r="0.7" fill="#5a78d8"/><circle cx="0" cy="0.3" r="3.3" fill="#ffff00" stroke="#d0b000" stroke-width="0.5"/><rect x="-1.5" y="-1" width="1" height="2" fill="#706000"/><rect x="0.5" y="-1" width="1" height="2" fill="#706000"/></g>
<circle cx="548.5" cy="103.5" r="3.05" fill="#fff" stroke="#000" stroke-width="1.25"/>
<circle cx="548.5" cy="111.5" r="3.05" fill="#fff" stroke="#000" stroke-width="1.25"/>
<circle cx="548.5" cy="119.5" r="3.05" fill="#fff" stroke="#000" stroke-width="1.25"/>
<circle cx="575.5" cy="111.5" r="3.05" fill="#fff" stroke="#000" stroke-width="1.25"/>
<circle cx="562.5" cy="93.5" r="3.05" fill="#fff" stroke="#000" stroke-width="1.25"/>
<g stroke="#000" stroke-width="1" shape-rendering="crispEdges"><line x1="674" y1="109.5" x2="677" y2="109.5"/><line x1="674" y1="117.5" x2="677" y2="117.5"/><line x1="674" y1="125.5" x2="677" y2="125.5"/><line x1="693" y1="117.5" x2="696" y2="117.5"/><line x1="685.5" y1="102" x2="685.5" y2="105"/></g>
<rect x="677" y="105" width="16" height="24" fill="#008000" shape-rendering="crispEdges"/>
<rect x="677" y="105" width="16" height="1" fill="#00ff00" shape-rendering="crispEdges"/><rect x="677" y="105" width="1" height="24" fill="#00ff00" shape-rendering="crispEdges"/><rect x="692" y="105" width="1" height="24" fill="#000" shape-rendering="crispEdges"/>
<g transform="translate(685.5 116.8)"><circle cx="3.46" cy="2.00" r="3.1" fill="#e8285c"/><circle cx="0.00" cy="4.00" r="3.1" fill="#e8285c"/><circle cx="-3.46" cy="2.00" r="3.1" fill="#e8285c"/><circle cx="-3.46" cy="-2.00" r="3.1" fill="#e8285c"/><circle cx="-0.00" cy="-4.00" r="3.1" fill="#e8285c"/><circle cx="3.46" cy="-2.00" r="3.1" fill="#e8285c"/><circle cx="3.72" cy="2.15" r="2.3" fill="#ff5c9a"/><circle cx="0.00" cy="4.30" r="2.3" fill="#ff5c9a"/><circle cx="-3.72" cy="2.15" r="2.3" fill="#ff5c9a"/><circle cx="-3.72" cy="-2.15" r="2.3" fill="#ff5c9a"/><circle cx="-0.00" cy="-4.30" r="2.3" fill="#ff5c9a"/><circle cx="3.72" cy="-2.15" r="2.3" fill="#ff5c9a"/><circle cx="4.24" cy="2.45" r="1.2" fill="#ffb8d4"/><circle cx="0.00" cy="4.90" r="1.2" fill="#ffb8d4"/><circle cx="-4.24" cy="2.45" r="1.2" fill="#ffb8d4"/><circle cx="-4.24" cy="-2.45" r="1.2" fill="#ffb8d4"/><circle cx="-0.00" cy="-4.90" r="1.2" fill="#ffb8d4"/><circle cx="4.24" cy="-2.45" r="1.2" fill="#ffb8d4"/><circle cx="3.60" cy="0.00" r="0.7" fill="#5a78d8"/><circle cx="1.80" cy="3.12" r="0.7" fill="#5a78d8"/><circle cx="-1.80" cy="3.12" r="0.7" fill="#5a78d8"/><circle cx="-3.60" cy="0.00" r="0.7" fill="#5a78d8"/><circle cx="-1.80" cy="-3.12" r="0.7" fill="#5a78d8"/><circle cx="1.80" cy="-3.12" r="0.7" fill="#5a78d8"/><circle cx="0" cy="0.3" r="3.3" fill="#ffff00" stroke="#d0b000" stroke-width="0.5"/><rect x="-1.5" y="-1" width="1" height="2" fill="#706000"/><rect x="0.5" y="-1" width="1" height="2" fill="#706000"/></g>
<circle cx="671.5" cy="109.5" r="3.05" fill="#fff" stroke="#000" stroke-width="1.25"/>
<circle cx="671.5" cy="117.5" r="3.05" fill="#fff" stroke="#000" stroke-width="1.25"/>
<circle cx="671.5" cy="125.5" r="3.05" fill="#fff" stroke="#000" stroke-width="1.25"/>
<circle cx="698.5" cy="117.5" r="3.05" fill="#fff" stroke="#000" stroke-width="1.25"/>
<circle cx="685.5" cy="99.5" r="3.05" fill="#fff" stroke="#000" stroke-width="1.25"/>
<g stroke="#000" stroke-width="1" shape-rendering="crispEdges"><line x1="587" y1="202.5" x2="590" y2="202.5"/><line x1="587" y1="210.5" x2="590" y2="210.5"/><line x1="587" y1="218.5" x2="590" y2="218.5"/><line x1="606" y1="210.5" x2="609" y2="210.5"/><line x1="598.5" y1="195" x2="598.5" y2="198"/></g>
<rect x="590" y="198" width="16" height="24" fill="#008000" shape-rendering="crispEdges"/>
<rect x="590" y="198" width="16" height="1" fill="#00ff00" shape-rendering="crispEdges"/><rect x="590" y="198" width="1" height="24" fill="#00ff00" shape-rendering="crispEdges"/><rect x="605" y="198" width="1" height="24" fill="#000" shape-rendering="crispEdges"/>
<g transform="translate(598.5 209.8)"><circle cx="3.46" cy="2.00" r="3.1" fill="#e8285c"/><circle cx="0.00" cy="4.00" r="3.1" fill="#e8285c"/><circle cx="-3.46" cy="2.00" r="3.1" fill="#e8285c"/><circle cx="-3.46" cy="-2.00" r="3.1" fill="#e8285c"/><circle cx="-0.00" cy="-4.00" r="3.1" fill="#e8285c"/><circle cx="3.46" cy="-2.00" r="3.1" fill="#e8285c"/><circle cx="3.72" cy="2.15" r="2.3" fill="#ff5c9a"/><circle cx="0.00" cy="4.30" r="2.3" fill="#ff5c9a"/><circle cx="-3.72" cy="2.15" r="2.3" fill="#ff5c9a"/><circle cx="-3.72" cy="-2.15" r="2.3" fill="#ff5c9a"/><circle cx="-0.00" cy="-4.30" r="2.3" fill="#ff5c9a"/><circle cx="3.72" cy="-2.15" r="2.3" fill="#ff5c9a"/><circle cx="4.24" cy="2.45" r="1.2" fill="#ffb8d4"/><circle cx="0.00" cy="4.90" r="1.2" fill="#ffb8d4"/><circle cx="-4.24" cy="2.45" r="1.2" fill="#ffb8d4"/><circle cx="-4.24" cy="-2.45" r="1.2" fill="#ffb8d4"/><circle cx="-0.00" cy="-4.90" r="1.2" fill="#ffb8d4"/><circle cx="4.24" cy="-2.45" r="1.2" fill="#ffb8d4"/><circle cx="3.60" cy="0.00" r="0.7" fill="#5a78d8"/><circle cx="1.80" cy="3.12" r="0.7" fill="#5a78d8"/><circle cx="-1.80" cy="3.12" r="0.7" fill="#5a78d8"/><circle cx="-3.60" cy="0.00" r="0.7" fill="#5a78d8"/><circle cx="-1.80" cy="-3.12" r="0.7" fill="#5a78d8"/><circle cx="1.80" cy="-3.12" r="0.7" fill="#5a78d8"/><circle cx="0" cy="0.3" r="3.3" fill="#ffff00" stroke="#d0b000" stroke-width="0.5"/><rect x="-1.5" y="-1" width="1" height="2" fill="#706000"/><rect x="0.5" y="-1" width="1" height="2" fill="#706000"/></g>
<circle cx="584.5" cy="202.5" r="3.05" fill="#fff" stroke="#000" stroke-width="1.25"/>
<circle cx="584.5" cy="210.5" r="3.05" fill="#fff" stroke="#000" stroke-width="1.25"/>
<circle cx="584.5" cy="218.5" r="3.05" fill="#fff" stroke="#000" stroke-width="1.25"/>
<circle cx="611.5" cy="210.5" r="3.05" fill="#fff" stroke="#000" stroke-width="1.25"/>
<circle cx="598.5" cy="192.5" r="3.05" fill="#fff" stroke="#000" stroke-width="1.25"/>
<g stroke="#000" stroke-width="1" shape-rendering="crispEdges"><line x1="634" y1="266.5" x2="637" y2="266.5"/><line x1="634" y1="274.5" x2="637" y2="274.5"/><line x1="634" y1="282.5" x2="637" y2="282.5"/><line x1="653" y1="274.5" x2="656" y2="274.5"/><line x1="645.5" y1="259" x2="645.5" y2="262"/></g>
<rect x="637" y="262" width="16" height="24" fill="#008000" shape-rendering="crispEdges"/>
<rect x="637" y="262" width="16" height="1" fill="#00ff00" shape-rendering="crispEdges"/><rect x="637" y="262" width="1" height="24" fill="#00ff00" shape-rendering="crispEdges"/><rect x="652" y="262" width="1" height="24" fill="#000" shape-rendering="crispEdges"/>
<g transform="translate(645.5 273.8)"><circle cx="3.46" cy="2.00" r="3.1" fill="#e8285c"/><circle cx="0.00" cy="4.00" r="3.1" fill="#e8285c"/><circle cx="-3.46" cy="2.00" r="3.1" fill="#e8285c"/><circle cx="-3.46" cy="-2.00" r="3.1" fill="#e8285c"/><circle cx="-0.00" cy="-4.00" r="3.1" fill="#e8285c"/><circle cx="3.46" cy="-2.00" r="3.1" fill="#e8285c"/><circle cx="3.72" cy="2.15" r="2.3" fill="#ff5c9a"/><circle cx="0.00" cy="4.30" r="2.3" fill="#ff5c9a"/><circle cx="-3.72" cy="2.15" r="2.3" fill="#ff5c9a"/><circle cx="-3.72" cy="-2.15" r="2.3" fill="#ff5c9a"/><circle cx="-0.00" cy="-4.30" r="2.3" fill="#ff5c9a"/><circle cx="3.72" cy="-2.15" r="2.3" fill="#ff5c9a"/><circle cx="4.24" cy="2.45" r="1.2" fill="#ffb8d4"/><circle cx="0.00" cy="4.90" r="1.2" fill="#ffb8d4"/><circle cx="-4.24" cy="2.45" r="1.2" fill="#ffb8d4"/><circle cx="-4.24" cy="-2.45" r="1.2" fill="#ffb8d4"/><circle cx="-0.00" cy="-4.90" r="1.2" fill="#ffb8d4"/><circle cx="4.24" cy="-2.45" r="1.2" fill="#ffb8d4"/><circle cx="3.60" cy="0.00" r="0.7" fill="#5a78d8"/><circle cx="1.80" cy="3.12" r="0.7" fill="#5a78d8"/><circle cx="-1.80" cy="3.12" r="0.7" fill="#5a78d8"/><circle cx="-3.60" cy="0.00" r="0.7" fill="#5a78d8"/><circle cx="-1.80" cy="-3.12" r="0.7" fill="#5a78d8"/><circle cx="1.80" cy="-3.12" r="0.7" fill="#5a78d8"/><circle cx="0" cy="0.3" r="3.3" fill="#ffff00" stroke="#d0b000" stroke-width="0.5"/><rect x="-1.5" y="-1" width="1" height="2" fill="#706000"/><rect x="0.5" y="-1" width="1" height="2" fill="#706000"/></g>
<circle cx="631.5" cy="266.5" r="3.05" fill="#fff" stroke="#000" stroke-width="1.25"/>
<circle cx="631.5" cy="274.5" r="3.05" fill="#fff" stroke="#000" stroke-width="1.25"/>
<circle cx="631.5" cy="282.5" r="3.05" fill="#fff" stroke="#000" stroke-width="1.25"/>
<circle cx="658.5" cy="274.5" r="3.05" fill="#fff" stroke="#000" stroke-width="1.25"/>
<circle cx="645.5" cy="256.5" r="3.05" fill="#fff" stroke="#000" stroke-width="1.25"/>
<g stroke="#000" stroke-width="1" shape-rendering="crispEdges"><line x1="625" y1="133.5" x2="628" y2="133.5"/><line x1="625" y1="141.5" x2="628" y2="141.5"/><line x1="644" y1="137.5" x2="647" y2="137.5"/></g>
<rect x="628" y="129" width="16" height="16" fill="#800080" shape-rendering="crispEdges"/>
<rect x="628" y="129" width="16" height="1" fill="#ff00ff" shape-rendering="crispEdges"/><rect x="628" y="129" width="1" height="16" fill="#ff00ff" shape-rendering="crispEdges"/>
<text x="632" y="142" font-family="Liberation Sans,sans-serif" font-size="14" fill="#ffff00">=</text>
<circle cx="622.5" cy="133.5" r="3.05" fill="#fff" stroke="#000" stroke-width="1.25"/>
<circle cx="622.5" cy="141.5" r="3.05" fill="#800000" stroke="#000" stroke-width="1.25"/>
<circle cx="649.5" cy="137.5" r="3.05" fill="#fff" stroke="#000" stroke-width="1.25"/>
<g stroke="#000" stroke-width="1" shape-rendering="crispEdges"><line x1="539" y1="226.5" x2="542" y2="226.5"/><line x1="539" y1="234.5" x2="542" y2="234.5"/><line x1="558" y1="230.5" x2="561" y2="230.5"/></g>
<rect x="541" y="221" width="18" height="18" fill="#0000ff" shape-rendering="crispEdges"/>
<rect x="542" y="222" width="16" height="16" fill="#800080" shape-rendering="crispEdges"/>
<rect x="542" y="222" width="16" height="1" fill="#ff00ff" shape-rendering="crispEdges"/><rect x="542" y="222" width="1" height="16" fill="#ff00ff" shape-rendering="crispEdges"/>
<text x="546" y="235" font-family="Liberation Sans,sans-serif" font-size="14" fill="#ffff00">=</text>
<circle cx="536.5" cy="226.5" r="3.05" fill="#fff" stroke="#000" stroke-width="1.25"/>
<circle cx="536.5" cy="234.5" r="3.05" fill="#800000" stroke="#000" stroke-width="1.25"/>
<circle cx="563.5" cy="230.5" r="3.05" fill="#fff" stroke="#000" stroke-width="1.25"/>
<g stroke="#000" stroke-width="1" shape-rendering="crispEdges"><line x1="583" y1="285.5" x2="586" y2="285.5"/><line x1="583" y1="293.5" x2="586" y2="293.5"/><line x1="602" y1="289.5" x2="605" y2="289.5"/></g>
<rect x="586" y="281" width="16" height="16" fill="#800080" shape-rendering="crispEdges"/>
<rect x="586" y="281" width="16" height="1" fill="#ff00ff" shape-rendering="crispEdges"/><rect x="586" y="281" width="1" height="16" fill="#ff00ff" shape-rendering="crispEdges"/>
<text x="590" y="294" font-family="Liberation Sans,sans-serif" font-size="14" fill="#ffff00">=</text>
<circle cx="580.5" cy="285.5" r="3.05" fill="#fff" stroke="#000" stroke-width="1.25"/>
<circle cx="580.5" cy="293.5" r="3.05" fill="#800000" stroke="#000" stroke-width="1.25"/>
<circle cx="607.5" cy="289.5" r="3.05" fill="#fff" stroke="#000" stroke-width="1.25"/>
</svg>
<div class="a" style="left:814px;top:29px;width:425px;height:484px;background:#fff"></div>
<div class="hd" style="left:814px;top:29px;width:425px"></div>
<div class="t " id="htgt" style="left:975px;top:31.6px;letter-spacing:-0.060px;">Set Target Document</div>
<div class="a" style="left:1208px;top:67px;width:1px;height:11px;background:repeating-linear-gradient(180deg,#b5b09c 0 1px,transparent 1px 2px)"></div>
<div class="a" style="left:1189px;top:85px;width:1px;height:29px;background:repeating-linear-gradient(180deg,#b5b09c 0 1px,transparent 1px 2px)"></div>
<div class="a" style="left:1170px;top:121px;width:1px;height:83px;background:repeating-linear-gradient(180deg,#b5b09c 0 1px,transparent 1px 2px)"></div>
<div class="a" style="left:1151px;top:211px;width:1px;height:29px;background:repeating-linear-gradient(180deg,#b5b09c 0 1px,transparent 1px 2px)"></div>
<div class="a" style="left:1132px;top:247px;width:1px;height:29px;background:repeating-linear-gradient(180deg,#b5b09c 0 1px,transparent 1px 2px)"></div>
<div class="a" style="left:1113px;top:283px;width:1px;height:11px;background:repeating-linear-gradient(180deg,#b5b09c 0 1px,transparent 1px 2px)"></div>
<div class="a" style="left:1094px;top:301px;width:1px;height:155px;background:repeating-linear-gradient(180deg,#b5b09c 0 1px,transparent 1px 2px)"></div>
<div class="ex" style="left:1223px;top:55px"><i></i></div>
<svg class="a" style="left:1203px;top:49px" width="14" height="16" shape-rendering="crispEdges"><path d="M0.5 0.5H9.5L12.5 3.5V14.5H0.5Z" fill="#fff" stroke="#000"/><path d="M9.5 0.5V3.5H12.5" fill="none" stroke="#000"/><rect x="12" y="4" width="1" height="11" fill="#000"/><rect x="1" y="14" width="12" height="1" fill="#000"/><rect x="3" y="3" width="5" height="1" fill="#000"/><rect x="3" y="5" width="7" height="1" fill="#000"/><rect x="3" y="7" width="7" height="1" fill="#000"/><rect x="3" y="9" width="7" height="1" fill="#000"/><rect x="3" y="11" width="7" height="1" fill="#000"/></svg>
<div class="tr pur" id="r0" style="right:44px;top:52px;letter-spacing:0.225px;">file:///c:/stylus/orderbyrtid/ord2008.11.19.11.50.38.680.xml</div>
<div class="ex" style="left:1204px;top:73px"><i></i></div>
<div class="a" style="left:1197px;top:77px;width:6px;height:1px;background:repeating-linear-gradient(90deg,#b5b09c 0 1px,transparent 1px 2px)"></div>
<svg class="a" style="left:1185px;top:67px" width="6" height="15" shape-rendering="crispEdges"><rect x="1" y="1" width="4" height="4" fill="#000"/><rect x="2" y="5" width="2" height="4" fill="#808080"/><rect x="0" y="9" width="6" height="6" fill="#0000ff"/></svg>
<svg class="a" style="left:1184px;top:71px" width="10" height="10"><path d="M1 5.5L3.5 8L8.5 1.5" fill="none" stroke="#ff0000" stroke-width="2"/></svg>
<div class="tr " id="r1" style="right:64px;top:70px;letter-spacing:-0.346px;">basplus</div>
<div class="a" style="left:1179px;top:95px;width:10px;height:1px;background:repeating-linear-gradient(90deg,#b5b09c 0 1px,transparent 1px 2px)"></div>
<svg class="a" style="left:1166.5px;top:87.7px" width="14" height="13"><polygon points="0.5,5.5 4.8,0.5 8.2,3.4 4,8.6" fill="#00ffff" stroke="#404040" stroke-width="0.7"/><polygon points="0.5,5.5 4,8.6 4,11 0.7,8.2" fill="#00e0e0" stroke="#303030" stroke-width="0.7"/><polygon points="4,8.6 8.2,3.4 8.2,6.3 4,11" fill="#909090" stroke="#000" stroke-width="0.9"/></svg>
<div class="tr " id="r2" style="right:83px;top:88px;letter-spacing:-0.447px;">xmlns</div>
<div class="ex" style="left:1185px;top:109px"><i></i></div>
<div class="a" style="left:1178px;top:113px;width:6px;height:1px;background:repeating-linear-gradient(90deg,#b5b09c 0 1px,transparent 1px 2px)"></div>
<svg class="a" style="left:1166px;top:103px" width="6" height="15" shape-rendering="crispEdges"><rect x="1" y="1" width="4" height="4" fill="#000"/><rect x="2" y="5" width="2" height="4" fill="#808080"/><rect x="0" y="9" width="6" height="6" fill="#0000ff"/></svg>
<div class="tr " id="r3" style="right:83px;top:106px;letter-spacing:-0.127px;">temporder</div>
<div class="a" style="left:814px;top:112px;width:290px;height:1px;background:#008000"></div>
<div class="a" style="left:1160px;top:131px;width:10px;height:1px;background:repeating-linear-gradient(90deg,#b5b09c 0 1px,transparent 1px 2px)"></div>
<svg class="a" style="left:1147.5px;top:123.7px" width="14" height="13"><polygon points="0.5,5.5 4.8,0.5 8.2,3.4 4,8.6" fill="#00ffff" stroke="#404040" stroke-width="0.7"/><polygon points="0.5,5.5 4,8.6 4,11 0.7,8.2" fill="#00e0e0" stroke="#303030" stroke-width="0.7"/><polygon points="4,8.6 8.2,3.4 8.2,6.3 4,11" fill="#909090" stroke="#000" stroke-width="0.9"/><text x="4" y="10.5" font-family="Liberation Serif,serif" font-weight="bold" font-size="12" fill="#ff0000">T</text></svg>
<div class="tr " id="r4" style="right:102px;top:124px;letter-spacing:0.042px;">created</div>
<div class="a" style="left:814px;top:130px;width:282px;height:1px;background:#008000"></div>
<div class="a" style="left:1160px;top:149px;width:10px;height:1px;background:repeating-linear-gradient(90deg,#b5b09c 0 1px,transparent 1px 2px)"></div>
<svg class="a" style="left:1147.5px;top:141.7px" width="14" height="13"><polygon points="0.5,5.5 4.8,0.5 8.2,3.4 4,8.6" fill="#00ffff" stroke="#404040" stroke-width="0.7"/><polygon points="0.5,5.5 4,8.6 4,11 0.7,8.2" fill="#00e0e0" stroke="#303030" stroke-width="0.7"/><polygon points="4,8.6 8.2,3.4 8.2,6.3 4,11" fill="#909090" stroke="#000" stroke-width="0.9"/></svg>
<div class="tr " id="r5" style="right:102px;top:142px;letter-spacing:-0.159px;">wholesaler</div>
<div class="a" style="left:1160px;top:167px;width:10px;height:1px;background:repeating-linear-gradient(90deg,#b5b09c 0 1px,transparent 1px 2px)"></div>
<svg class="a" style="left:1147.5px;top:159.7px" width="14" height="13"><polygon points="0.5,5.5 4.8,0.5 8.2,3.4 4,8.6" fill="#00ffff" stroke="#404040" stroke-width="0.7"/><polygon points="0.5,5.5 4,8.6 4,11 0.7,8.2" fill="#00e0e0" stroke="#303030" stroke-width="0.7"/><polygon points="4,8.6 8.2,3.4 8.2,6.3 4,11" fill="#909090" stroke="#000" stroke-width="0.9"/><text x="4" y="10.5" font-family="Liberation Serif,serif" font-weight="bold" font-size="12" fill="#ff0000">T</text></svg>
<div class="tr " id="r6" style="right:102px;top:160px;letter-spacing:0.168px;">ordertype</div>
<div class="a" style="left:1160px;top:185px;width:10px;height:1px;background:repeating-linear-gradient(90deg,#b5b09c 0 1px,transparent 1px 2px)"></div>
<svg class="a" style="left:1147.5px;top:177.7px" width="14" height="13"><polygon points="0.5,5.5 4.8,0.5 8.2,3.4 4,8.6" fill="#00ffff" stroke="#404040" stroke-width="0.7"/><polygon points="0.5,5.5 4,8.6 4,11 0.7,8.2" fill="#00e0e0" stroke="#303030" stroke-width="0.7"/><polygon points="4,8.6 8.2,3.4 8.2,6.3 4,11" fill="#909090" stroke="#000" stroke-width="0.9"/></svg>
<div class="tr " id="r7" style="right:102px;top:178px;letter-spacing:-0.099px;">uniqueorderid</div>
<div class="ex" style="left:1166px;top:199px"><i></i></div>
<div class="a" style="left:1159px;top:203px;width:6px;height:1px;background:repeating-linear-gradient(90deg,#b5b09c 0 1px,transparent 1px 2px)"></div>
<svg class="a" style="left:1147px;top:193px" width="6" height="15" shape-rendering="crispEdges"><rect x="1" y="1" width="4" height="4" fill="#000"/><rect x="2" y="5" width="2" height="4" fill="#808080"/><rect x="0" y="9" width="6" height="6" fill="#0000ff"/></svg>
<div class="tr " id="r8" style="right:102px;top:196px;letter-spacing:-0.170px;">invoiceaddress</div>
<div class="a" style="left:814px;top:202px;width:248px;height:1px;background:#008000"></div>
<div class="a" style="left:1141px;top:221px;width:10px;height:1px;background:repeating-linear-gradient(90deg,#b5b09c 0 1px,transparent 1px 2px)"></div>
<svg class="a" style="left:1128.5px;top:213.7px" width="14" height="13"><polygon points="0.5,5.5 4.8,0.5 8.2,3.4 4,8.6" fill="#00ffff" stroke="#404040" stroke-width="0.7"/><polygon points="0.5,5.5 4,8.6 4,11 0.7,8.2" fill="#00e0e0" stroke="#303030" stroke-width="0.7"/><polygon points="4,8.6 8.2,3.4 8.2,6.3 4,11" fill="#909090" stroke="#000" stroke-width="0.9"/><text x="4" y="10.5" font-family="Liberation Serif,serif" font-weight="bold" font-size="12" fill="#ff0000">T</text></svg>
<div class="tr " id="r9" style="right:121px;top:214px;letter-spacing:-0.198px;">customerno</div>
<div class="ex" style="left:1147px;top:235px"><i></i></div>
<div class="a" style="left:1140px;top:239px;width:6px;height:1px;background:repeating-linear-gradient(90deg,#b5b09c 0 1px,transparent 1px 2px)"></div>
<svg class="a" style="left:1128px;top:229px" width="6" height="15" shape-rendering="crispEdges"><rect x="1" y="1" width="4" height="4" fill="#000"/><rect x="2" y="5" width="2" height="4" fill="#808080"/><rect x="0" y="9" width="6" height="6" fill="#0000ff"/></svg>
<div class="tr " id="r10" style="right:121px;top:232px;letter-spacing:-0.208px;">shippingaddress</div>
<div class="a" style="left:814px;top:238px;width:224px;height:1px;background:#008000"></div>
<div class="a" style="left:1122px;top:257px;width:10px;height:1px;background:repeating-linear-gradient(90deg,#b5b09c 0 1px,transparent 1px 2px)"></div>
<svg class="a" style="left:1109.5px;top:249.7px" width="14" height="13"><polygon points="0.5,5.5 4.8,0.5 8.2,3.4 4,8.6" fill="#00ffff" stroke="#404040" stroke-width="0.7"/><polygon points="0.5,5.5 4,8.6 4,11 0.7,8.2" fill="#00e0e0" stroke="#303030" stroke-width="0.7"/><polygon points="4,8.6 8.2,3.4 8.2,6.3 4,11" fill="#909090" stroke="#000" stroke-width="0.9"/><text x="4" y="10.5" font-family="Liberation Serif,serif" font-weight="bold" font-size="12" fill="#ff0000">T</text></svg>
<div class="tr " id="r11" style="right:140px;top:250px;letter-spacing:-0.322px;">shippingno</div>
<div class="ex" style="left:1128px;top:271px"><i></i></div>
<div class="a" style="left:1121px;top:275px;width:6px;height:1px;background:repeating-linear-gradient(90deg,#b5b09c 0 1px,transparent 1px 2px)"></div>
<svg class="a" style="left:1109px;top:265px" width="6" height="15" shape-rendering="crispEdges"><rect x="1" y="1" width="4" height="4" fill="#000"/><rect x="2" y="5" width="2" height="4" fill="#808080"/><rect x="0" y="9" width="6" height="6" fill="#0000ff"/></svg>
<div class="tr " id="r12" style="right:140px;top:268px;letter-spacing:-0.126px;">temporderlines</div>
<div class="ex" style="left:1109px;top:289px"><i></i></div>
<div class="a" style="left:1102px;top:293px;width:6px;height:1px;background:repeating-linear-gradient(90deg,#b5b09c 0 1px,transparent 1px 2px)"></div>
<svg class="a" style="left:1088px;top:283px" width="14" height="15" shape-rendering="crispEdges"><rect x="5" y="2" width="4" height="4" fill="#000"/><rect x="6" y="6" width="2" height="3" fill="#808080"/><rect x="2" y="9" width="10" height="1" fill="#808080"/><rect x="2" y="9" width="1" height="2" fill="#808080"/><rect x="11" y="9" width="1" height="2" fill="#808080"/><rect x="6" y="9" width="2" height="2" fill="#808080"/><rect x="0" y="11" width="4" height="4" fill="#0000ff"/><rect x="5" y="11" width="4" height="4" fill="#0000ff"/><rect x="10" y="11" width="4" height="4" fill="#0000ff"/></svg>
<div class="tr " id="r13" style="right:159px;top:286px;letter-spacing:-0.195px;">item</div>
<div class="a" style="left:814px;top:292px;width:242px;height:1px;background:#008000"></div>
<div class="a" style="left:1084px;top:311px;width:10px;height:1px;background:repeating-linear-gradient(90deg,#b5b09c 0 1px,transparent 1px 2px)"></div>
<svg class="a" style="left:1071.5px;top:303.7px" width="14" height="13"><polygon points="0.5,5.5 4.8,0.5 8.2,3.4 4,8.6" fill="#00ffff" stroke="#404040" stroke-width="0.7"/><polygon points="0.5,5.5 4,8.6 4,11 0.7,8.2" fill="#00e0e0" stroke="#303030" stroke-width="0.7"/><polygon points="4,8.6 8.2,3.4 8.2,6.3 4,11" fill="#909090" stroke="#000" stroke-width="0.9"/></svg>
<div class="tr " id="r14" style="right:178px;top:304px;letter-spacing:-0.406px;">line</div>
<div class="a" style="left:814px;top:310px;width:228px;height:1px;background:#008000"></div>
<div class="a" style="left:1084px;top:329px;width:10px;height:1px;background:repeating-linear-gradient(90deg,#b5b09c 0 1px,transparent 1px 2px)"></div>
<svg class="a" style="left:1071.5px;top:321.7px" width="14" height="13"><polygon points="0.5,5.5 4.8,0.5 8.2,3.4 4,8.6" fill="#00ffff" stroke="#404040" stroke-width="0.7"/><polygon points="0.5,5.5 4,8.6 4,11 0.7,8.2" fill="#00e0e0" stroke="#303030" stroke-width="0.7"/><polygon points="4,8.6 8.2,3.4 8.2,6.3 4,11" fill="#909090" stroke="#000" stroke-width="0.9"/></svg>
<div class="tr " id="r15" style="right:178px;top:322px;letter-spacing:0.019px;">artid</div>
<div class="a" style="left:814px;top:328px;width:222px;height:1px;background:#008000"></div>
<div class="a" style="left:1084px;top:347px;width:10px;height:1px;background:repeating-linear-gradient(90deg,#b5b09c 0 1px,transparent 1px 2px)"></div>
<svg class="a" style="left:1071.5px;top:339.7px" width="14" height="13"><polygon points="0.5,5.5 4.8,0.5 8.2,3.4 4,8.6" fill="#00ffff" stroke="#404040" stroke-width="0.7"/><polygon points="0.5,5.5 4,8.6 4,11 0.7,8.2" fill="#00e0e0" stroke="#303030" stroke-width="0.7"/><polygon points="4,8.6 8.2,3.4 8.2,6.3 4,11" fill="#909090" stroke="#000" stroke-width="0.9"/></svg>
<div class="tr " id="r16" style="right:178px;top:340px;letter-spacing:0.109px;">artist</div>
<div class="a" style="left:1084px;top:365px;width:10px;height:1px;background:repeating-linear-gradient(90deg,#b5b09c 0 1px,transparent 1px 2px)"></div>
<svg class="a" style="left:1071.5px;top:357.7px" width="14" height="13"><polygon points="0.5,5.5 4.8,0.5 8.2,3.4 4,8.6" fill="#00ffff" stroke="#404040" stroke-width="0.7"/><polygon points="0.5,5.5 4,8.6 4,11 0.7,8.2" fill="#00e0e0" stroke="#303030" stroke-width="0.7"/><polygon points="4,8.6 8.2,3.4 8.2,6.3 4,11" fill="#909090" stroke="#000" stroke-width="0.9"/></svg>
<div class="tr " id="r17" style="right:178px;top:358px;letter-spacing:0.075px;">title</div>
<div class="a" style="left:1084px;top:383px;width:10px;height:1px;background:repeating-linear-gradient(90deg,#b5b09c 0 1px,transparent 1px 2px)"></div>
<svg class="a" style="left:1071.5px;top:375.7px" width="14" height="13"><polygon points="0.5,5.5 4.8,0.5 8.2,3.4 4,8.6" fill="#00ffff" stroke="#404040" stroke-width="0.7"/><polygon points="0.5,5.5 4,8.6 4,11 0.7,8.2" fill="#00e0e0" stroke="#303030" stroke-width="0.7"/><polygon points="4,8.6 8.2,3.4 8.2,6.3 4,11" fill="#909090" stroke="#000" stroke-width="0.9"/></svg>
<div class="tr " id="r18" style="right:178px;top:376px;letter-spacing:-0.394px;">media</div>
<div class="a" style="left:1084px;top:401px;width:10px;height:1px;background:repeating-linear-gradient(90deg,#b5b09c 0 1px,transparent 1px 2px)"></div>
<svg class="a" style="left:1071.5px;top:393.7px" width="14" height="13"><polygon points="0.5,5.5 4.8,0.5 8.2,3.4 4,8.6" fill="#00ffff" stroke="#404040" stroke-width="0.7"/><polygon points="0.5,5.5 4,8.6 4,11 0.7,8.2" fill="#00e0e0" stroke="#303030" stroke-width="0.7"/><polygon points="4,8.6 8.2,3.4 8.2,6.3 4,11" fill="#909090" stroke="#000" stroke-width="0.9"/></svg>
<div class="tr " id="r19" style="right:178px;top:394px;letter-spacing:0.271px;">qty</div>
<div class="a" style="left:814px;top:400px;width:228px;height:1px;background:#008000"></div>
<div class="a" style="left:1084px;top:419px;width:10px;height:1px;background:repeating-linear-gradient(90deg,#b5b09c 0 1px,transparent 1px 2px)"></div>
<svg class="a" style="left:1071.5px;top:411.7px" width="14" height="13"><polygon points="0.5,5.5 4.8,0.5 8.2,3.4 4,8.6" fill="#00ffff" stroke="#404040" stroke-width="0.7"/><polygon points="0.5,5.5 4,8.6 4,11 0.7,8.2" fill="#00e0e0" stroke="#303030" stroke-width="0.7"/><polygon points="4,8.6 8.2,3.4 8.2,6.3 4,11" fill="#909090" stroke="#000" stroke-width="0.9"/></svg>
<div class="tr " id="r20" style="right:178px;top:412px;letter-spacing:-0.020px;">poreference</div>
<div class="a" style="left:1084px;top:437px;width:10px;height:1px;background:repeating-linear-gradient(90deg,#b5b09c 0 1px,transparent 1px 2px)"></div>
<svg class="a" style="left:1071.5px;top:429.7px" width="14" height="13"><polygon points="0.5,5.5 4.8,0.5 8.2,3.4 4,8.6" fill="#00ffff" stroke="#404040" stroke-width="0.7"/><polygon points="0.5,5.5 4,8.6 4,11 0.7,8.2" fill="#00e0e0" stroke="#303030" stroke-width="0.7"/><polygon points="4,8.6 8.2,3.4 8.2,6.3 4,11" fill="#909090" stroke="#000" stroke-width="0.9"/></svg>
<div class="tr " id="r21" style="right:178px;top:430px;letter-spacing:-0.105px;">nobackorder</div>
<div class="a" style="left:1084px;top:455px;width:10px;height:1px;background:repeating-linear-gradient(90deg,#b5b09c 0 1px,transparent 1px 2px)"></div>
<svg class="a" style="left:1071.5px;top:447.7px" width="14" height="13"><polygon points="0.5,5.5 4.8,0.5 8.2,3.4 4,8.6" fill="#00ffff" stroke="#404040" stroke-width="0.7"/><polygon points="0.5,5.5 4,8.6 4,11 0.7,8.2" fill="#00e0e0" stroke="#303030" stroke-width="0.7"/><polygon points="4,8.6 8.2,3.4 8.2,6.3 4,11" fill="#909090" stroke="#000" stroke-width="0.9"/></svg>
<div class="tr " id="r22" style="right:178px;top:448px;letter-spacing:-0.144px;">listprice</div>
<div class="a" style="left:0;top:512px;width:1239px;height:1px;background:#fff"></div><div class="a" style="left:0;top:513px;width:1239px;height:6px;background:#efedde"></div>
<div class="a" style="left:0;top:519px;width:1239px;height:1px;background:#7f9db9"></div>
<svg class="a" style="left:1226px;top:514px" width="12" height="7"><polygon points="1,1.2 10.4,1.2 5.7,6" fill="#c8c8c8" stroke="#000" stroke-width="1"/><rect x="0.6" y="0.8" width="10.2" height="1.2" fill="#000"/></svg>
<div class="a" style="left:0;top:520px;width:1222px;height:252px;background:#fff;overflow:hidden" id="cp">
<div class="a" style="left:0;top:0;width:20px;height:252px;background:#d4d0c8;background-image:repeating-conic-gradient(#fff 0 25%,#d4d0c8 0 50%);background-size:2px 2px"></div>
<div class="a" style="left:20px;top:0;width:10px;height:252px;background:#e6e3d8;background-image:repeating-conic-gradient(#fff 0 25%,#e3e0d4 0 50%);background-size:2px 2px"></div>
</div>
<div class="a" style="left:0;top:520px;width:1222px;height:252px;overflow:hidden">
<div class="a" style="left:147px;top:136px;width:1035px;height:17px;background:#316ac5"></div>
<div class="code" style="top:1.5px"><span class="kw">en</span> <span class="st">"5052"</span></div>
<div class="code" style="top:18.5px"><span class="kw">se</span> <span class="st">"5054"</span></div>
<div class="code" style="top:35.5px"></div>
<div class="code" style="top:52.5px"></div>
<div class="code" style="top:69.5px"><span class="el">asplus</span>&gt;</div>
<div class="code" style="top:86.5px">{</div>
<div class="code" style="top:103.5px"><span class="kw">for</span> $ORDERS <span class="kw">in</span> doc(<span class="st">'converter:EDI:long=yes?file:///c:/stylus/fnac_test/in/order.edi'</span>)/EANCOM/ORDERS</div>
<div class="code" style="top:120.5px"><span class="kw">return</span></div>
<div class="code" style="top:137.5px">&lt;<span class="el">a:temporder</span> <span class="sel">created="{for $DTM in $ORDERS/DTM where $DTM/DTM01-DateTimePeriod/DTM0101-DateTimePeriodQualifier = "137" return }"</span> <span class="at">ordertype=</span>"</div>
<div class="code" style="top:154.5px">    {</div>
<div class="code" style="top:171.5px">    <span class="kw">for</span> $NAD <span class="kw">in</span> $ORDERS/GROUP_2/NAD</div>
<div class="code" style="top:188.5px">    <span class="kw">where</span> $NAD/NAD01-PartyQualifier <span class="op">=</span> <span class="st">"BY"</span></div>
<div class="code" style="top:205.5px">    <span class="kw">return</span></div>
<div class="code" style="top:222.5px">    &lt;<span class="el">a:invoiceaddress</span> <span class="at">customerno=</span><span class="nv">"</span>{local:EAN2baspas($NAD/NAD02-PartyIdentificationDetails/NAD0201-PartyIdIdentification)}<span class="nv">"</span>&gt;</div>
<div class="code" style="top:239.5px">        {</div>
<div class="a" style="left:24px;top:0;width:1px;height:43px;background:#000"></div><div class="a" style="left:24px;top:42px;width:4px;height:1px;background:#000"></div>
<div class="a" style="left:24px;top:72px;width:1px;height:180px;background:#000"></div>
<div class="a" style="left:20px;top:72px;width:9px;height:9px;border:1px solid #000;background:#fff"><div class="a" style="left:1px;top:3px;width:5px;height:1px;background:#000"></div></div>
<div class="a" style="left:20px;top:89px;width:9px;height:9px;border:1px solid #000;background:#fff"><div class="a" style="left:1px;top:3px;width:5px;height:1px;background:#000"></div></div>
<div class="a" style="left:20px;top:140px;width:9px;height:9px;border:1px solid #000;background:#fff"><div class="a" style="left:1px;top:3px;width:5px;height:1px;background:#000"></div></div>
<div class="a" style="left:20px;top:157px;width:9px;height:9px;border:1px solid #000;background:#fff"><div class="a" style="left:1px;top:3px;width:5px;height:1px;background:#000"></div></div>
<div class="a" style="left:20px;top:225px;width:9px;height:9px;border:1px solid #000;background:#fff"><div class="a" style="left:1px;top:3px;width:5px;height:1px;background:#000"></div></div>
<div class="a" style="left:20px;top:242px;width:9px;height:9px;border:1px solid #000;background:#fff"><div class="a" style="left:1px;top:3px;width:5px;height:1px;background:#000"></div></div>
</div>
<div class="a" style="left:1221px;top:520px;width:18px;height:252px;background:linear-gradient(90deg,#f3f1ec,#fbfaf8 50%,#fefefd)"></div>
<div class="sb" style="left:1222px;top:520px;width:15px;height:16px"></div>
<svg class="a" style="left:1225px;top:525px" width="9" height="6"><path d="M1 5L4.5 1.5L8 5" fill="none" stroke="#4d6185" stroke-width="2.3"/></svg>
<div class="sb" style="left:1222px;top:571px;width:15px;height:78px"></div>
<svg class="a" style="left:1225px;top:606px" width="8" height="8" shape-rendering="crispEdges"><g fill="#eef4fe"><rect x="0" y="0" width="7" height="1"/><rect x="0" y="2" width="7" height="1"/><rect x="0" y="4" width="7" height="1"/><rect x="0" y="6" width="7" height="1"/></g><g fill="#8cb0f8"><rect x="1" y="1" width="7" height="1"/><rect x="1" y="3" width="7" height="1"/><rect x="1" y="5" width="7" height="1"/><rect x="1" y="7" width="7" height="1"/></g></svg>
<div class="sb" style="left:1222px;top:755px;width:15px;height:16px"></div>
<svg class="a" style="left:1225px;top:760px" width="9" height="6"><path d="M1 1L4.5 4.5L8 1" fill="none" stroke="#4d6185" stroke-width="2.3"/></svg>
<div class="a" style="left:0;top:772px;width:1222px;height:17px;background:linear-gradient(180deg,#f3f1ec,#fbfaf8 50%,#fefefd)"></div>
<div class="a" style="left:1222px;top:772px;width:17px;height:17px;background:#ece9d8"></div>
<div class="sb" style="left:0px;top:773px;width:16px;height:15px"></div>
<svg class="a" style="left:4px;top:776px" width="6" height="9"><path d="M5 1L1.5 4.5L5 8" fill="none" stroke="#4d6185" stroke-width="2.3"/></svg>
<div class="sb" style="left:39px;top:773px;width:736px;height:15px"></div>
<svg class="a" style="left:403px;top:777px" width="8" height="8" shape-rendering="crispEdges"><g fill="#eef4fe"><rect x="0" y="0" width="1" height="7"/><rect x="2" y="0" width="1" height="7"/><rect x="4" y="0" width="1" height="7"/><rect x="6" y="0" width="1" height="7"/></g><g fill="#8cb0f8"><rect x="1" y="1" width="1" height="7"/><rect x="3" y="1" width="1" height="7"/><rect x="5" y="1" width="1" height="7"/><rect x="7" y="1" width="1" height="7"/></g></svg>
<div class="sb" style="left:1205px;top:773px;width:16px;height:15px"></div>
<svg class="a" style="left:1210px;top:776px" width="6" height="9"><path d="M1 1L4.5 4.5L1 8" fill="none" stroke="#4d6185" stroke-width="2.3"/></svg>
<div class="a" style="left:0;top:789px;width:1239px;height:17px;background:#ece9d8"></div>
<div class="a" style="left:0;top:806px;width:1239px;height:18px;background:#fff"></div>
<svg class="a" style="left:0;top:789px" width="1239" height="20"><polygon points="88,0 143,0 138,17 93,17" fill="#fff"/><path d="M0 0.5H88M143 0.5H1239" stroke="#000" stroke-width="1" fill="none"/><path d="M1 1L5.7 17M86.5 17L90 4" stroke="#000" stroke-width="1" fill="none"/><path d="M88.5 1L93 17M137.5 17L142.5 1" stroke="#000" stroke-width="1" fill="none"/><rect x="0" y="17" width="1238" height="1" fill="#b5b2a4"/><rect x="0" y="18" width="1238" height="1" fill="#a19e91"/><rect x="0" y="19" width="1238" height="1" fill="#d4d1c6"/></svg>
<div class="a" style="left:0;top:808px;width:1px;height:16px;background:#aca899"></div>
<div class="t " id="tab1" style="left:8.5px;top:790.8px;letter-spacing:-0.169px;">XQuery Source</div>
<div class="t " id="tab2" style="left:96px;top:790.8px;letter-spacing:-0.216px;">Mapper</div>
</body></html>
